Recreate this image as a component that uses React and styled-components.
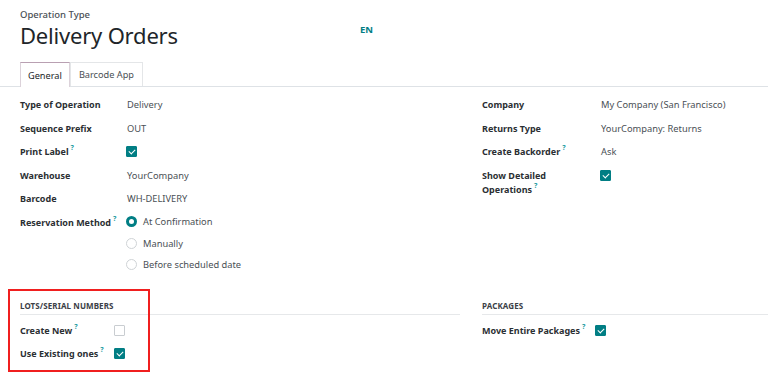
import React from 'react';
import styled, { createGlobalStyle } from 'styled-components';

const GlobalStyle = createGlobalStyle`
    body {
        margin: 0;
        background: #fff;
        font-family: "Noto Sans", "Open Sans", sans-serif;
        color: #212529;
    }
`

const Sheet = styled.div`
    width: 768px;
    height: 382px;
    overflow: hidden;
`
const Header = styled.div`
    padding: 8px 20px 0;
`
const Breadcrumb = styled.div`
    font-size: 9.5px;
    line-height: 13px;
    color: #4a4f55;
    font-weight: 500;
`
const TitleRow = styled.div`
    display: flex;
    align-items: flex-start;
    height: 31px;
`
const Title = styled.h1`
    margin: 0;
    width: 340px;
    font-size: 22px;
    font-weight: 400;
    line-height: 28px;
    color: #212529;
    letter-spacing: -0.2px;
`
const Lang = styled.span`
    font-size: 9.5px;
    font-weight: 700;
    color: #017e84;
    line-height: 13px;
    margin-top: 2px;
`
const TabBar = styled.div`
    display: flex;
    margin-top: 10px;
    padding-left: 20px;
    border-bottom: 1px solid #dee2e6;
`
const Tab = styled.div`
    padding: 0 ${p => p.$active ? '7px' : '8px'};
    display: flex;
    align-items: center;
    font-size: 9.2px;
    color: ${p => p.$active ? '#212529' : '#4a4f55'};
    border: 1px solid ${p => p.$active ? '#dcd2da' : '#e4e6e8'};
    border-top-color: ${p => p.$active ? '#b9a0b2' : '#e4e6e8'};
    border-bottom: none;
    margin-bottom: ${p => p.$active ? '-1px' : '0'};
    height: ${p => p.$active ? '24px' : '23px'};
    background: #fff;
`
const Body = styled.div`
    padding: 6px 0 0 20px;
`
const Columns = styled.div`
    display: grid;
    grid-template-columns: 440px 1fr;
    column-gap: 22px;
`
const Group = styled.div`
    display: flex;
    flex-direction: column;
`
const Row = styled.div`
    display: flex;
    align-items: flex-start;
    min-height: 23.5px;
`
const Label = styled.div`
    width: ${p => p.$w}px;
    flex: none;
    font-size: 9px;
    font-weight: 700;
    line-height: 14px;
    padding-top: 5px;
    color: #2b2f33;
`
const Help = styled.sup`
    font-size: 7px;
    color: #1a9aa0;
    margin-left: 2px;
    vertical-align: 5px;
    line-height: 0;
`
const Value = styled.div`
    font-size: 9.3px;
    line-height: 14px;
    padding-top: 5px;
    color: #4a4f55;
`
const Check = styled.span`
    display: inline-block;
    box-sizing: border-box;
    width: 11px;
    height: 11px;
    margin-top: 6px;
    margin-left: -1px;
    border-radius: 1px;
    background: ${p => p.$on ? '#017e84' : '#fff'};
    border: 1px solid ${p => p.$on ? '#017e84' : '#c9cdd1'};
    position: relative;
    &::after {
        content: '';
        display: ${p => p.$on ? 'block' : 'none'};
        position: absolute;
        left: 3px;
        top: 1px;
        width: 3px;
        height: 5px;
        border: solid #fff;
        border-width: 0 1.5px 1.5px 0;
        transform: rotate(45deg);
    }
`
const RadioList = styled.div`
    display: flex;
    flex-direction: column;
`
const RadioItem = styled.div`
    display: flex;
    align-items: center;
    height: 21.5px;
    gap: 6px;
    font-size: 9.3px;
    color: #4a4f55;
    &:first-child {
        height: 22px;
    }
`
const Radio = styled.span`
    box-sizing: border-box;
    width: 11px;
    height: 11px;
    border-radius: 50%;
    flex: none;
    margin-left: -1px;
    border: ${p => p.$on ? '3px solid #017e84' : '1px solid #cfd3d6'};
    background: #fff;
`
const Sections = styled.div`
    display: grid;
    grid-template-columns: 440px 1fr;
    column-gap: 22px;
    margin-top: 24px;
`
const Section = styled.div`
    position: relative;
`
const SectionTitle = styled.div`
    font-size: 8px;
    font-weight: 700;
    text-transform: uppercase;
    color: #3b4046;
    line-height: 12px;
    padding-bottom: 2px;
    border-bottom: 1px solid #e6e8ea;
    margin-bottom: 4px;
    letter-spacing: 0.1px;
`
const Highlight = styled.div`
    position: absolute;
    left: -12px;
    top: -11px;
    width: 142px;
    height: 83px;
    border: 2px solid #f01f1f;
    box-sizing: border-box;
    pointer-events: none;
`

const App = () => {
    return (
        <Sheet>
            <GlobalStyle />
            <Header>
                <Breadcrumb>Operation Type</Breadcrumb>
                <TitleRow>
                    <Title>Delivery Orders</Title>
                    <Lang>EN</Lang>
                </TitleRow>
            </Header>
            <TabBar>
                <Tab $active>General</Tab>
                <Tab>Barcode App</Tab>
            </TabBar>
            <Body>
                <Columns>
                    <Group>
                        <Row><Label $w={107}>Type of Operation</Label><Value>Delivery</Value></Row>
                        <Row><Label $w={107}>Sequence Prefix</Label><Value>OUT</Value></Row>
                        <Row><Label $w={107}>Print Label<Help>?</Help></Label><Check $on /></Row>
                        <Row><Label $w={107}>Warehouse</Label><Value>YourCompany</Value></Row>
                        <Row><Label $w={107}>Barcode</Label><Value>WH-DELIVERY</Value></Row>
                        <Row>
                            <Label $w={107}>Reservation Method<Help>?</Help></Label>
                            <RadioList>
                                <RadioItem><Radio $on />At Confirmation</RadioItem>
                                <RadioItem><Radio />Manually</RadioItem>
                                <RadioItem><Radio />Before scheduled date</RadioItem>
                            </RadioList>
                        </Row>
                    </Group>
                    <Group>
                        <Row><Label $w={119}>Company</Label><Value>My Company (San Francisco)</Value></Row>
                        <Row><Label $w={119}>Returns Type</Label><Value>YourCompany: Returns</Value></Row>
                        <Row><Label $w={119}>Create Backorder<Help>?</Help></Label><Value>Ask</Value></Row>
                        <Row><Label $w={119}>Show Detailed<br />Operations<Help>?</Help></Label><Check $on /></Row>
                    </Group>
                </Columns>
                <Sections>
                    <Section>
                        <Highlight />
                        <SectionTitle>Lots/Serial Numbers</SectionTitle>
                        <Row><Label $w={95}>Create New<Help>?</Help></Label><Check /></Row>
                        <Row><Label $w={95}>Use Existing ones<Help>?</Help></Label><Check $on /></Row>
                    </Section>
                    <Section>
                        <SectionTitle>Packages</SectionTitle>
                        <Row><Label $w={114}>Move Entire Packages<Help>?</Help></Label><Check $on /></Row>
                    </Section>
                </Sections>
            </Body>
        </Sheet>
    );
};

export default App;
